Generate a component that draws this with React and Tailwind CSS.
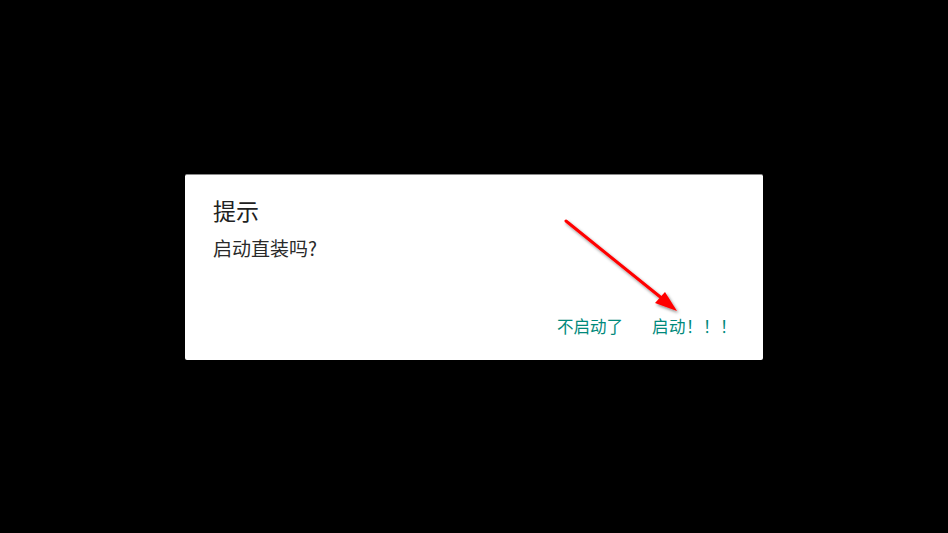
import React from "react";

export default function App() {
  return (
    <div
      className="w-[948px] h-[533px] bg-black flex items-center justify-center"
      style={{ fontFamily: '"Noto Sans CJK SC", "Noto Sans", sans-serif' }}
    >
      <div className="relative w-[578px] h-[186px] bg-white rounded-[2px] border-t border-[#8a8a8a] flex flex-col">
        <div className="pl-[28px] pt-[20px] text-[23px] leading-[30px] text-[#212121]">提示</div>
        <div className="pl-[28px] pt-[10px] text-[19px] leading-[26px] text-[#2a2a2a]">启动直装吗?</div>
        <div className="mt-auto mb-[22px] flex justify-end pr-[26px] gap-[29px] text-[16.5px] leading-[24px] text-[#00897b]">
          <span>不启动了</span>
          <span className="tracking-[0.5px]">启动！！！</span>
        </div>
        <svg
          className="absolute left-0 top-0 pointer-events-none"
          width="578"
          height="186"
          viewBox="0 0 578 186"
        >
          <defs>
            <filter id="sh" x="-20%" y="-20%" width="140%" height="140%">
              <feDropShadow dx="1.5" dy="2" stdDeviation="1.5" floodColor="#000" floodOpacity="0.45" />
            </filter>
          </defs>
          <g filter="url(#sh)">
            <line x1="381" y1="46" x2="484" y2="129" stroke="#ff0000" strokeWidth="3" strokeLinecap="round" />
            <polygon points="492,136 480,117 470,128" fill="#ff0000" />
          </g>
        </svg>
      </div>
    </div>
  );
}
